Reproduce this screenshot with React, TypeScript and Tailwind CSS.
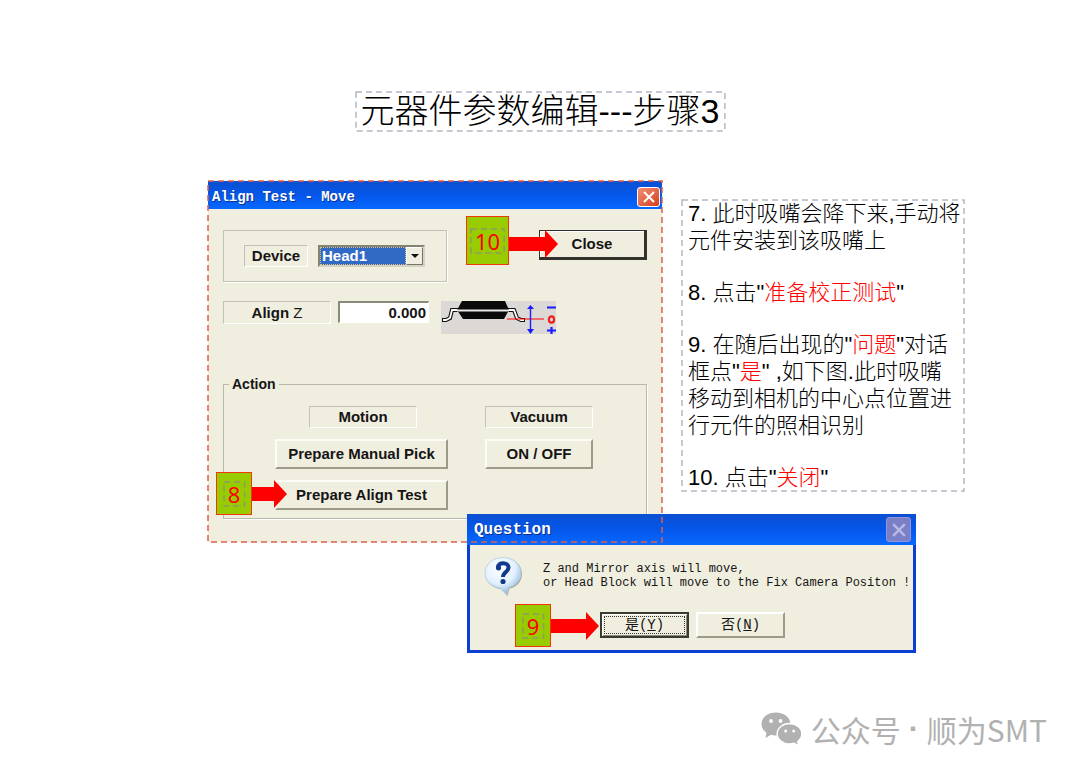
import type { ReactNode } from "react";

function DashedFrame({ className = "" }: { className?: string }) {
  return (
    <svg
      aria-hidden="true"
      className={`pointer-events-none absolute inset-0 h-full w-full overflow-visible ${className}`}
    >
      <rect
        width="100%"
        height="100%"
        fill="none"
        stroke="currentColor"
        strokeWidth="1.5"
        strokeDasharray="6 4"
      />
    </svg>
  );
}

function Callout({
  step,
  boxClass,
  arrowWidth,
  arrowClass = "",
  className,
}: {
  step: number;
  boxClass: string;
  arrowWidth: number;
  arrowClass?: string;
  className: string;
}) {
  const neck = arrowWidth - 13;
  return (
    <div className={`pointer-events-none absolute z-30 flex items-center ${className}`}>
      <div
        className={`flex items-center justify-center border border-[#f0380c] bg-[#99cc00] ${boxClass}`}
      >
        <span className="relative flex h-6 items-center justify-center px-1 font-['Noto_Sans',sans-serif] text-[22px] leading-6 font-normal text-[#ff0000]">
          {step}
          <DashedFrame className="text-[#8f9a6a]" />
        </span>
      </div>
      <svg width={arrowWidth} height="28" className={arrowClass} aria-hidden="true">
        <path
          d={`M0 7H${neck}V0L${arrowWidth} 14L${neck} 28V21H0Z`}
          fill="#ff0000"
        />
      </svg>
    </div>
  );
}

function CaptionBox({ children, className = "" }: { children: ReactNode; className?: string }) {
  return (
    <div
      className={`flex items-center justify-center border border-t-[#c3c1b2] border-l-[#c3c1b2] border-r-white border-b-white ${className}`}
    >
      {children}
    </div>
  );
}

function PushButton({ children, className = "" }: { children: ReactNode; className?: string }) {
  return (
    <button
      type="button"
      className={`h-[30px] border-2 border-t-[#fdfdf8] border-l-[#fdfdf8] border-r-[#9d9a88] border-b-[#9d9a88] bg-[#f0eedf] whitespace-nowrap ${className}`}
    >
      {children}
    </button>
  );
}

function CloseCross({ className = "h-3 w-3" }: { className?: string }) {
  return (
    <svg viewBox="0 0 12 12" className={className} aria-hidden="true">
      <path d="M1 1L11 11M11 1L1 11" stroke="currentColor" strokeWidth="2" />
    </svg>
  );
}

function LeadDrawing() {
  return (
    <svg width="115" height="33" viewBox="0 0 115 33" aria-hidden="true">
      <rect width="115" height="33" fill="#dbd8d5" />
      <path
        d="M1 19H5L9 17L11 9H19M66 9H73L76 17L80 19H84"
        fill="none"
        stroke="#111"
        strokeWidth="4"
      />
      <path
        d="M2 19H5L9 17L11 9H19M66 9H73L76 17L80 19H83"
        fill="none"
        stroke="#fff"
        strokeWidth="1.8"
      />
      <path d="M21 0H64L68 9L63 18H22L16 9Z" fill="#0a0a0a" />
      <path d="M16 9.5H68" stroke="#e8e8e8" strokeWidth="2" />
      <path d="M66 18H103" stroke="#f00" strokeWidth="1" />
      <path d="M89.5 6V30" stroke="#1b1bff" strokeWidth="1.4" />
      <path d="M89.5 4L93 8H86ZM89.5 33L93 28H86Z" fill="#1b1bff" />
      <path d="M106 6.5H115M106 29.5H115M110.5 26V33" stroke="#1b1bff" strokeWidth="2.2" />
      <ellipse cx="110.5" cy="18.5" rx="2.6" ry="3.2" fill="none" stroke="#f02020" strokeWidth="2.2" />
    </svg>
  );
}

function QuestionBubble() {
  return (
    <svg width="39" height="40" viewBox="0 0 39 40" className="shrink-0" aria-hidden="true">
      <defs>
        <radialGradient id="bubble" cx="42%" cy="30%" r="70%">
          <stop offset="0" stopColor="#ffffff" />
          <stop offset="0.6" stopColor="#e3f1fd" />
          <stop offset="1" stopColor="#8fb8e2" />
        </radialGradient>
      </defs>
      <path
        d="M20 1C30 1 38 7.500 38 17C38 25 32 30.500 25.500 31.500L23.500 39L16.500 32C8 31 2 25 2 17C2 7.500 10 1 20 1Z"
        fill="#a9a99d"
      />
      <path
        d="M19 0.500C29 0.500 37 7 37 16C37 23.500 31 29 24.500 30.500L22.500 37.500L16 31C7 30 1 24 1 16C1 7 9 0.500 19 0.500Z"
        fill="url(#bubble)"
        stroke="#b4cde6"
        strokeWidth="0.8"
      />
      <path
        d="M14 10.500C14 4.500 24.500 5 24.500 10.500C24.500 15 19 15 19 20"
        fill="none"
        stroke="#123a8c"
        strokeWidth="4"
      />
      <circle cx="14.500" cy="10.800" r="2.600" fill="#123a8c" />
      <circle cx="19" cy="24.500" r="2.600" fill="#123a8c" />
    </svg>
  );
}

function AlignTestDialog() {
  return (
    <section className="relative bg-[#f0eedf] font-['Liberation_Sans',sans-serif] text-[15px] leading-4 font-bold text-[#151515]">
      <header className="flex h-7 items-center justify-between bg-linear-to-b from-[#0a4fd0] via-[#0557ea] to-[#0868ff] pr-[2px] pl-1">
        <h2 className="pt-1 font-['Liberation_Mono',monospace] text-sm text-white [text-shadow:1px_1px_0_#0a2f8c]">
          Align Test - Move
        </h2>
        <button
          type="button"
          aria-label="关闭窗口"
          className="mt-1 flex h-5 w-[23px] items-center justify-center rounded-[3px] border border-white bg-linear-to-br from-[#f09078] to-[#d43a14] text-white"
        >
          <CloseCross />
        </button>
      </header>

      <div className="px-[15px] pt-[21px] pb-[23px]">
        <div className="flex items-start justify-between">
          <div className="flex h-[52px] w-56 items-center gap-[10px] border border-[#c3c1b2] pl-5 shadow-[1px_1px_0_#fff]">
            <CaptionBox className="h-[22px] w-16">
              <label htmlFor="device">Device</label>
            </CaptionBox>
            <div className="relative h-[22px] w-[107px] border-2 border-t-[#85836f] border-l-[#85836f] border-r-[#d6d3c4] border-b-[#d6d3c4]">
              <select
                id="device"
                defaultValue="Head1"
                className="block h-[18px] w-[86px] appearance-none border border-dotted border-[#e0c080] bg-[#316ac5] pl-[1px] leading-4 text-white outline-none"
              >
                <option>Head1</option>
              </select>
              <span className="pointer-events-none absolute top-0 right-0 flex h-[18px] w-[17px] items-center justify-center border border-t-white border-l-white border-r-[#77756a] border-b-[#77756a] bg-[#f0eedf]">
                <svg width="8" height="4" aria-hidden="true">
                  <path d="M0 0H8L4 4Z" fill="#111" />
                </svg>
              </span>
            </div>
          </div>
          <div className="relative">
            <button
              type="button"
              className="h-[30px] w-[108px] border border-r-[3px] border-b-[3px] border-[#33322c] bg-[#f0eedf] shadow-[inset_1px_1px_0_#fff]"
            >
              Close
            </button>
            <Callout
              step={10}
              boxClass="h-[49px] w-[43px]"
              arrowWidth={49}
              arrowClass="mt-[7px]"
              className="-top-[14px] -left-[73px]"
            />
          </div>
        </div>

        <div className="mt-[19px] flex items-start">
          <CaptionBox className="h-[23px] w-[108px]">
            <label htmlFor="align-z">
              Align <span className="font-normal">Z</span>
            </label>
          </CaptionBox>
          <input
            id="align-z"
            defaultValue="0.000"
            className="ml-[7px] h-[22px] w-[91px] border-2 border-r border-b border-t-[#8b897a] border-l-[#8b897a] border-r-white border-b-white bg-white pr-[2px] text-right outline-none"
          />
          <div className="ml-3">
            <LeadDrawing />
          </div>
        </div>

        <fieldset className="mt-[42px] border border-[#bab8aa] pb-2 pl-[51px] shadow-[1px_1px_0_#fff]">
          <legend className="ml-[-46px] px-[3px] text-[14px]">Action</legend>
          <div className="grid grid-cols-[173px_108px] gap-x-[37px] gap-y-[11px] pt-[14px]">
            <CaptionBox className="ml-[34px] h-[22px] w-[108px]">Motion</CaptionBox>
            <CaptionBox className="h-[22px] w-[108px]">Vacuum</CaptionBox>
            <PushButton>Prepare Manual Pick</PushButton>
            <PushButton>ON / OFF</PushButton>
            <div className="relative">
              <PushButton className="w-full">Prepare Align Test</PushButton>
              <Callout
                step={8}
                boxClass="h-[43px] w-9"
                arrowWidth={35}
                className="-top-2 -left-[59px]"
              />
            </div>
          </div>
        </fieldset>
      </div>
      <DashedFrame className="z-20 text-[#e0604c]" />
    </section>
  );
}

function Notes() {
  return (
    <section className="relative mt-[19px] flex flex-col gap-[25px] self-start pl-[6px] text-[22px] leading-[27px] font-light whitespace-nowrap text-black">
      <p>
        7. 此时吸嘴会降下来,手动将
        <br />
        元件安装到该吸嘴上
      </p>
      <p>
        8. 点击"<em className="text-[#ff0000] not-italic">准备校正测试</em>"
      </p>
      <p>
        9. 在随后出现的"<em className="text-[#ff0000] not-italic">问题</em>"对话
        <br />
        框点"<em className="text-[#ff0000] not-italic">是</em>" ,如下图.此时吸嘴
        <br />
        移动到相机的中心点位置进
        <br />
        行元件的照相识别
      </p>
      <p>
        10. 点击"<em className="text-[#ff0000] not-italic">关闭</em>"
      </p>
      <DashedFrame className="text-[#b4b8c2]" />
    </section>
  );
}

function QuestionDialog() {
  return (
    <section className="relative z-10 -mt-7 ml-[467px] w-[449px] border-3 border-t-0 border-[#0b3fd4] bg-[#f0eedf] font-['Liberation_Mono','Noto_Sans_CJK_SC',monospace] text-[#151515]">
      <header className="-mx-[3px] flex h-[31px] items-center justify-between bg-linear-to-b from-[#0a4fd0] via-[#0557ea] to-[#0868ff] pr-[5px] pl-[7px]">
        <h2 className="text-base font-bold text-white [text-shadow:1px_1px_0_#0a2f8c]">
          Question
        </h2>
        <button
          type="button"
          aria-label="关闭提示"
          disabled
          className="flex h-[25px] w-[25px] items-center justify-center rounded-[3px] border border-[#8f96dc] bg-[#7b7fc6] text-[#b9bbe6]"
        >
          <CloseCross className="h-[14px] w-[14px]" />
        </button>
      </header>
      <div className="flex gap-5 pt-3 pl-[14px]">
        <QuestionBubble />
        <p className="pt-[5px] text-xs leading-[14px] whitespace-nowrap">
          Z and Mirror axis will move,
          <br />
          or Head Block will move to the Fix Camera Positon !
        </p>
      </div>
      <div className="mt-[15px] flex gap-[7px] pb-[12px] pl-[130px] text-sm">
        <div className="relative">
          <button
            type="button"
            className="block h-[26px] w-[89px] border-2 border-[#3a3932] bg-[#f0eedf] p-[2px] leading-4 shadow-[inset_1px_1px_0_#fff,inset_-1px_-1px_0_#8b897a]"
          >
            <span className="flex h-full items-center justify-center border border-dotted border-[#333]">
              是(<u>Y</u>)
            </span>
          </button>
          <Callout
            step={9}
            boxClass="h-[43px] w-9"
            arrowWidth={48}
            className="-top-2 -left-[85px]"
          />
        </div>
        <button
          type="button"
          className="h-[26px] w-[89px] border-2 border-t-white border-l-white border-r-[#9d9a88] border-b-[#9d9a88] bg-[#f0eedf] leading-4"
        >
          否(<u>N</u>)
        </button>
      </div>
    </section>
  );
}

function WeChatMark() {
  return (
    <svg width="42" height="36" viewBox="0 0 42 36" aria-hidden="true">
      <path
        d="M15 1.500C7 1.500 0.500 6.500 0.500 13C0.500 16.700 2.500 19.700 5.500 21.800L4.500 27L10 23.700C11.500 24.200 13 24.400 15 24.400C23 24.400 29.500 19.300 29.500 13C29.500 6.500 23 1.500 15 1.500Z"
        fill="#b1b1b1"
      />
      <path
        d="M28.500 12.500C35.300 12.500 40.800 17 40.800 22.700C40.800 26 39.200 28.700 36.700 30.500L37.700 34.800L33 32.200C31.500 32.700 30 32.900 28.500 32.900C21.700 32.900 16.200 28.400 16.200 22.700C16.200 17 21.700 12.500 28.500 12.500Z"
        fill="#b1b1b1"
        stroke="#fff"
        strokeWidth="1.400"
      />
      <g fill="#fff">
        <circle cx="10" cy="10" r="1.900" />
        <circle cx="19.500" cy="10" r="1.900" />
        <circle cx="24.700" cy="20" r="1.500" />
        <circle cx="32.700" cy="20" r="1.500" />
      </g>
    </svg>
  );
}

export default function App() {
  return (
    <main className="min-h-screen bg-white pt-[92px] font-['Liberation_Sans','Noto_Sans_CJK_SC',sans-serif]">
      <div className="flex justify-center">
        <h1 className="relative px-[5px] text-[34px] leading-[39px] font-light whitespace-nowrap text-black">
          元器件参数编辑---步骤3
          <DashedFrame className="text-[#b4b8c2]" />
        </h1>
      </div>

      <div className="mt-[50px] grid grid-cols-[454fr_282fr] gap-5 pr-[116px] pl-52">
        <AlignTestDialog />
        <Notes />
      </div>
      <QuestionDialog />

      <footer className="mt-[56px] flex items-center justify-end gap-2 pr-[33px] pb-6">
        <WeChatMark />
        <p className="flex gap-2 font-['Noto_Sans_CJK_SC',sans-serif] text-[30px] leading-10 text-[#b1b1b1]">
          <span>公众号</span>
          <span className="font-['Liberation_Sans',sans-serif] font-bold">·</span>
          <span>顺为SMT</span>
        </p>
      </footer>
    </main>
  );
}
